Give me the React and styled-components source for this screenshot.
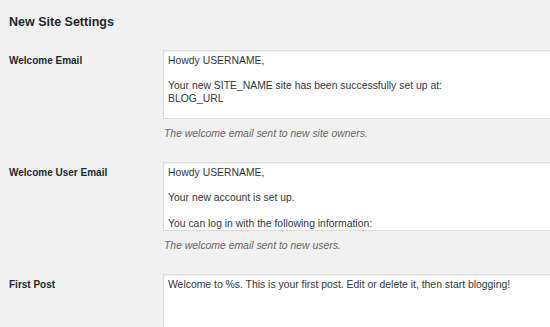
import React from "react";
import styled, { createGlobalStyle } from "styled-components";

const GlobalStyle = createGlobalStyle`
  html, body {
    margin: 0;
    padding: 0;
    background: #f1f1f1;
    overflow: hidden;
  }
  body {
    font-family: "Liberation Sans", Arial, sans-serif;
    color: #23282d;
  }
`;

const settings = [
  {
    label: "Welcome Email",
    text: "Howdy USERNAME,\n\nYour new SITE_NAME site has been successfully set up at:\nBLOG_URL\n\nYou can log in to the administrator account with the following information:",
    desc: "The welcome email sent to new site owners.",
  },
  {
    label: "Welcome User Email",
    text: "Howdy USERNAME,\n\nYour new account is set up.\n\nYou can log in with the following information:\nUsername: USERNAME",
    desc: "The welcome email sent to new users.",
  },
  {
    label: "First Post",
    text: "Welcome to %s. This is your first post. Edit or delete it, then start blogging!",
  },
];

const App = () => {
  return (
    <>
      <GlobalStyle />
      <Page>
        <Title>New Site Settings</Title>
        <Form>
          {settings.map((item) => (
            <Row key={item.label}>
              <Label>{item.label}</Label>
              <Field>
                <TextArea readOnly defaultValue={item.text} />
                {item.desc && <Desc>{item.desc}</Desc>}
              </Field>
            </Row>
          ))}
        </Form>
      </Page>
    </>
  );
};

export default App;

const Page = styled.div`
  padding: 14px 0 0 9px;
  width: 620px;
  height: 313px;
  overflow: hidden;
`;

const Title = styled.h2`
  margin: 0;
  font-size: 12.5px;
  font-weight: bold;
  line-height: 16px;
  color: #23282d;
`;

const Form = styled.div`
  margin-top: 20px;
  display: flex;
  flex-direction: column;
  gap: 21px;
`;

const Row = styled.div`
  display: grid;
  grid-template-columns: 154px 1fr;
`;

const Label = styled.div`
  font-size: 10px;
  font-weight: bold;
  line-height: 14px;
  padding-top: 4px;
`;

const Field = styled.div`
  display: flex;
  flex-direction: column;
`;

const TextArea = styled.textarea`
  box-sizing: border-box;
  width: 440px;
  height: 69px;
  margin: 0;
  padding: 4px 4px 3px;
  border: 1px solid #ddd;
  background: #fff;
  font-family: "Liberation Sans", Arial, sans-serif;
  font-size: 10.4px;
  line-height: 12.7px;
  color: #32373c;
  resize: none;
  overflow: hidden;
  box-shadow: inset 0 1px 2px rgba(0, 0, 0, 0.07);
`;

const Desc = styled.p`
  margin: 8px 0 0 1px;
  font-size: 10.4px;
  line-height: 14px;
  font-style: italic;
  color: #666;
`;
